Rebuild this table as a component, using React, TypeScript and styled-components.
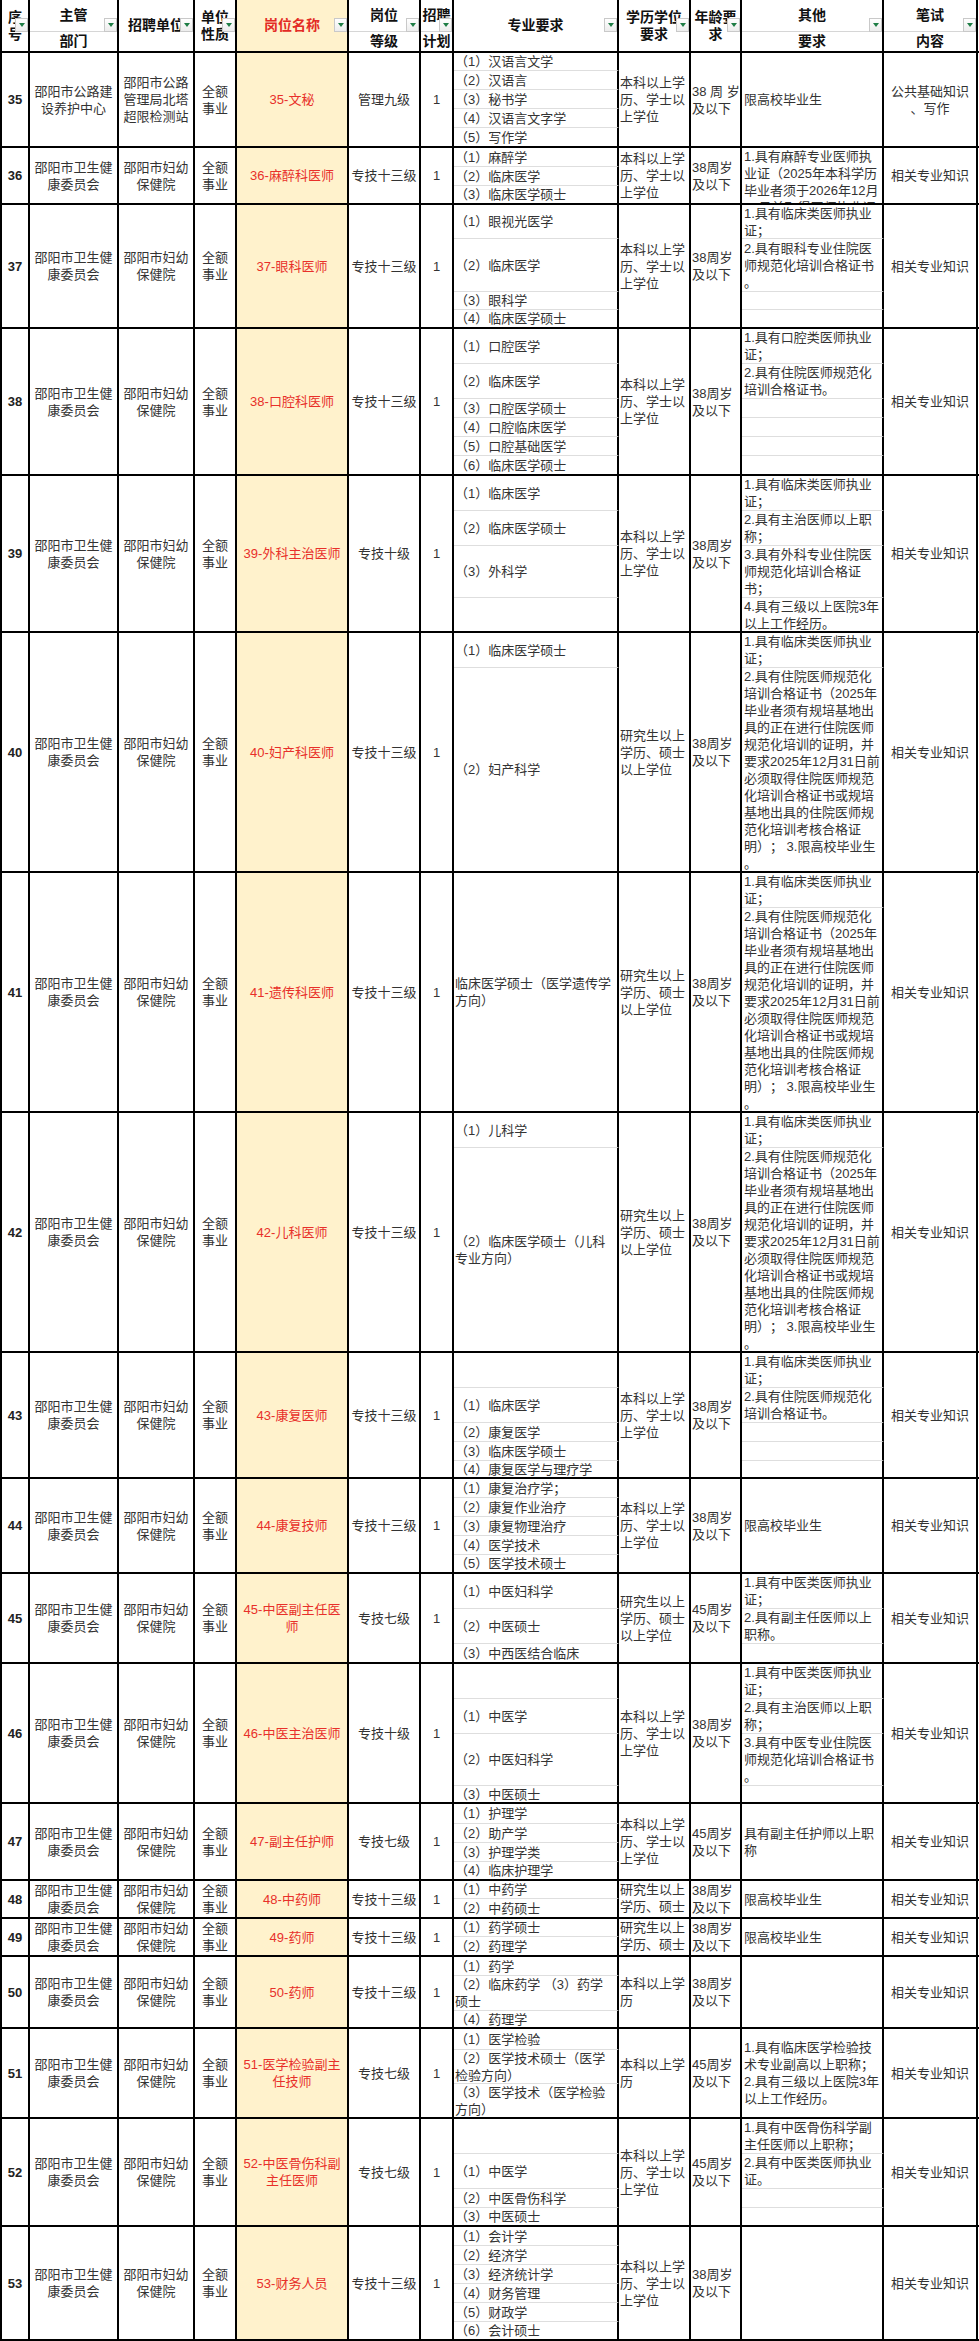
import React from 'react';
import styled, { createGlobalStyle, css } from 'styled-components';

const GlobalStyle = createGlobalStyle`
  html, body {
    margin: 0;
    padding: 0;
    background: #fff;
  }
  body {
    font-family: "Liberation Sans", "Noto Sans CJK SC", sans-serif;
    font-size: 13px;
    color: #333;
    text-spacing-trim: space-all;
  }
`;

// column widths include each cell's 2px right border
const COLS = '28px 89px 76px 42px 112px 72px 33px 165px 72px 51px 142px 94px';

const Sheet = styled.div`
  width: 978px;
  border-left: 2px solid #000;
  display: flex;
  flex-direction: column;
`;

const Row = styled.div<{ $h: number; $rows: string }>`
  display: grid;
  grid-template-columns: ${COLS};
  grid-template-rows: ${p => p.$rows};
  height: ${p => p.$h}px;
  box-sizing: border-box;
  border-bottom: 2px solid #000;
`;

const cellBase = css`
  box-sizing: border-box;
  border-right: 2px solid #000;
  overflow: hidden;
  min-height: 0;
  display: flex;
  flex-direction: column;
  justify-content: safe center;
  line-height: 17px;
  white-space: pre-line;
`;

// ---- header ----

const HeadCell = styled.div<{ $yellow?: boolean }>`
  ${cellBase};
  position: relative;
  grid-row: 1 / -1;
  justify-content: flex-start;
  background: ${p => (p.$yellow ? '#fff2cc' : '#fff')};
`;

const HeadText = styled.div<{ $red?: boolean }>`
  flex: 1;
  display: flex;
  align-items: center;
  justify-content: center;
  text-align: center;
  padding: 0 1px;
  font-weight: bold;
  font-size: 14px;
  line-height: 17px;
  color: ${p => (p.$red ? '#e32b25' : '#111')};
`;

const HeadTop = styled(HeadText)`
  flex: 0 0 32px;
  box-sizing: border-box;
  border-bottom: 1px solid #d6d6d6;
`;

const FilterBtn = styled.span`
  position: absolute;
  right: 0;
  top: 18px;
  width: 13px;
  height: 14px;
  box-sizing: border-box;
  border: 1px solid #c9c9c9;
  background: linear-gradient(#ffffff, #ededed);
  display: flex;
  align-items: center;
  justify-content: center;

  &::after {
    content: '';
    width: 0;
    height: 0;
    border-left: 3.5px solid transparent;
    border-right: 3.5px solid transparent;
    border-top: 4px solid #1e7d45;
  }
`;

// ---- body cells ----

const NoCell = styled.div`
  ${cellBase};
  grid-column: 1;
  grid-row: 1 / -1;
  align-items: center;
  font-weight: bold;
  color: #222;
`;

const CenterCell = styled.div<{ $col: number }>`
  ${cellBase};
  grid-column: ${p => p.$col};
  grid-row: 1 / -1;
  text-align: center;
  padding: 0 2px;
`;

const NameCell = styled.div`
  ${cellBase};
  grid-column: 5;
  grid-row: 1 / -1;
  text-align: center;
  padding: 0 4px;
  background: #fff2cc;
  color: #e8302a;
`;

const LeftCell = styled.div<{ $col: number }>`
  ${cellBase};
  grid-column: ${p => p.$col};
  grid-row: 1 / -1;
  padding: 0 0 0 1px;
`;

const ExamCell = styled.div`
  ${cellBase};
  grid-column: 12;
  grid-row: 1 / -1;
  text-align: center;
  padding: 0 4px;
  line-break: anywhere;
`;

const SubCell = styled.div<{ $col: number; $row: string; $last?: boolean; $other?: boolean }>`
  ${cellBase};
  grid-column: ${p => p.$col};
  grid-row: ${p => p.$row};
  border-bottom: ${p => (p.$last ? 'none' : '1px solid #dedede')};
  padding: ${p => (p.$other ? '0 0 0 2px' : '0 2px 0 1px')};
  ${p => p.$other && 'line-break: anywhere;'}
`;

// ---- data ----

type Job = {
  no: number;
  dept?: string;
  unit?: string;
  name: string;
  level?: string;
  edu?: string;
  age?: string;
  exam?: string;
  h: number;
  subs: number[];
  majors: (string | null)[] | string;
  other: (string | null)[] | string;
};

const BK = '本科以上学历、学士以上学位';
const YJ = '研究生以上学历、硕士以上学位';
const A45 = '45周岁及以下';
const LIMIT = '限高校毕业生';
const C1 = '1.具有临床类医师执业证；';
const RES2 = '2.具有住院医师规范化培训合格证书。';
const RES =
  '2.具有住院医师规范化培训合格证书（2025年毕业者须有规培基地出具的正在进行住院医师规范化培训的证明，并要求2025年12月31日前必须取得住院医师规范化培训合格证书或规培基地出具的住院医师规范化培训考核合格证\n明）； 3.限高校毕业生。';

const jobs: Job[] = [
  {
    no: 35,
    dept: '邵阳市公路建设养护中心',
    unit: '邵阳市公路管理局北塔超限检测站',
    name: '35-文秘',
    level: '管理九级',
    age: '38 周 岁及以下',
    exam: '公共基础知识、写作',
    h: 95,
    subs: [18, 19, 19, 19],
    majors: ['（1）汉语言文学', '（2）汉语言', '（3）秘书学', '（4）汉语言文字学', '（5）写作学'],
    other: LIMIT,
  },
  {
    no: 36,
    name: '36-麻醉科医师',
    h: 57,
    subs: [19, 19],
    majors: ['（1）麻醉学', '（2）临床医学', '（3）临床医学硕士'],
    other: '1.具有麻醉专业医师执业证（2025年本科学历毕业者须于2026年12月31日前取得医师执业证书）。',
  },
  {
    no: 37,
    name: '37-眼科医师',
    h: 124,
    subs: [34, 53, 18],
    majors: ['（1）眼视光医学', '（2）临床医学', '（3）眼科学', '（4）临床医学硕士'],
    other: [C1, '2.具有眼科专业住院医师规范化培训合格证书。', null, null],
  },
  {
    no: 38,
    name: '38-口腔科医师',
    h: 147,
    subs: [35, 35, 19, 19, 19],
    majors: ['（1）口腔医学', '（2）临床医学', '（3）口腔医学硕士', '（4）口腔临床医学', '（5）口腔基础医学', '（6）临床医学硕士'],
    other: ['1.具有口腔类医师执业证；', RES2, null, null, null, null],
  },
  {
    no: 39,
    name: '39-外科主治医师',
    level: '专技十级',
    h: 157,
    subs: [35, 35, 52],
    majors: ['（1）临床医学', '（2）临床医学硕士', '（3）外科学', null],
    other: [C1, '2.具有主治医师以上职称；', '3.具有外科专业住院医师规范化培训合格证\n书；', '4.具有三级以上医院3年以上工作经历。'],
  },
  {
    no: 40,
    name: '40-妇产科医师',
    edu: YJ,
    h: 240,
    subs: [35],
    majors: ['（1）临床医学硕士', '（2）妇产科学'],
    other: [C1, RES],
  },
  {
    no: 41,
    name: '41-遗传科医师',
    edu: YJ,
    h: 240,
    subs: [35],
    majors: '临床医学硕士（医学遗传学方向）',
    other: [C1, RES],
  },
  {
    no: 42,
    name: '42-儿科医师',
    edu: YJ,
    h: 240,
    subs: [35],
    majors: ['（1）儿科学', '（2）临床医学硕士（儿科专业方向）'],
    other: [C1, RES],
  },
  {
    no: 43,
    name: '43-康复医师',
    h: 126,
    subs: [35, 35, 19, 19],
    majors: [null, '（1）临床医学', '（2）康复医学', '（3）临床医学硕士', '（4）康复医学与理疗学'],
    other: [C1, RES2, null, null, null],
  },
  {
    no: 44,
    name: '44-康复技师',
    h: 95,
    subs: [19, 19, 19, 19],
    majors: ['（1）康复治疗学；', '（2）康复作业治疗', '（3）康复物理治疗', '（4）医学技术', '（5）医学技术硕士'],
    other: LIMIT,
  },
  {
    no: 45,
    name: '45-中医副主任医师',
    level: '专技七级',
    edu: YJ,
    age: A45,
    h: 90,
    subs: [35, 35],
    majors: ['（1）中医妇科学', '（2）中医硕士', '（3）中西医结合临床'],
    other: ['1.具有中医类医师执业证；', '2.具有副主任医师以上职称。', null],
  },
  {
    no: 46,
    name: '46-中医主治医师',
    level: '专技十级',
    h: 140,
    subs: [35, 35, 52],
    majors: [null, '（1）中医学', '（2）中医妇科学', '（3）中医硕士'],
    other: ['1.具有中医类医师执业证；', '2.具有主治医师以上职称；', '3.具有中医专业住院医师规范化培训合格证书。', null],
  },
  {
    no: 47,
    name: '47-副主任护师',
    level: '专技七级',
    age: A45,
    h: 77,
    subs: [20, 19, 19],
    majors: ['（1）护理学', '（2）助产学', '（3）护理学类', '（4）临床护理学'],
    other: '具有副主任护师以上职称',
  },
  {
    no: 48,
    name: '48-中药师',
    edu: YJ,
    h: 38,
    subs: [18],
    majors: ['（1）中药学', '（2）中药硕士'],
    other: LIMIT,
  },
  {
    no: 49,
    name: '49-药师',
    edu: YJ,
    h: 38,
    subs: [18],
    majors: ['（1）药学硕士', '（2）药理学'],
    other: LIMIT,
  },
  {
    no: 50,
    name: '50-药师',
    edu: '本科以上学历',
    h: 72,
    subs: [19, 35],
    majors: ['（1）药学', '（2）临床药学 （3）药学\n硕士', '（4）药理学'],
    other: '',
  },
  {
    no: 51,
    name: '51-医学检验副主任技师',
    level: '专技七级',
    edu: '本科以上学历',
    age: A45,
    h: 90,
    subs: [21, 34],
    majors: ['（1）医学检验', '（2）医学技术硕士（医学检验方向）', '（3）医学技术（医学检验方向）'],
    other: '1.具有临床医学检验技术专业副高以上职称；\n2.具有三级以上医院3年以上工作经历。',
  },
  {
    no: 52,
    name: '52-中医骨伤科副主任医师',
    level: '专技七级',
    age: A45,
    h: 108,
    subs: [35, 35, 19],
    majors: [null, '（1）中医学', '（2）中医骨伤科学', '（3）中医硕士'],
    other: ['1.具有中医骨伤科学副主任医师以上职称；', '2.具有中医类医师执业证。', null, null],
  },
  {
    no: 53,
    name: '53-财务人员',
    h: 114,
    subs: [19, 19, 19, 19, 19],
    majors: ['（1）会计学', '（2）经济学', '（3）经济统计学', '（4）财务管理', '（5）财政学', '（6）会计硕士'],
    other: '',
  },
];

function SubColumn({ col, items, other }: { col: number; items: (string | null)[] | string; other?: boolean }) {
  if (typeof items === 'string') {
    return (
      <SubCell $col={col} $row="1 / -1" $last $other={other}>
        {items}
      </SubCell>
    );
  }
  return (
    <>
      {items.map((t, i) => (
        <SubCell key={i} $col={col} $row={`${i + 1}`} $last={i === items.length - 1} $other={other}>
          {t}
        </SubCell>
      ))}
    </>
  );
}

function JobRow({ job }: { job: Job }) {
  const rows = job.subs.map(s => `${s}px`).join(' ') + ' minmax(0, 1fr)';
  return (
    <Row $h={job.h} $rows={rows}>
      <NoCell>{job.no}</NoCell>
      <CenterCell $col={2}>{job.dept ?? '邵阳市卫生健康委员会'}</CenterCell>
      <CenterCell $col={3}>{job.unit ?? '邵阳市妇幼保健院'}</CenterCell>
      <CenterCell $col={4}>全额事业</CenterCell>
      <NameCell>{job.name}</NameCell>
      <CenterCell $col={6}>{job.level ?? '专技十三级'}</CenterCell>
      <CenterCell $col={7}>1</CenterCell>
      <SubColumn col={8} items={job.majors} />
      <LeftCell $col={9}>{job.edu ?? BK}</LeftCell>
      <LeftCell $col={10}>{job.age ?? '38周岁及以下'}</LeftCell>
      <SubColumn col={11} items={job.other} other />
      <ExamCell>{job.exam ?? '相关专业知识'}</ExamCell>
    </Row>
  );
}

type Head = { top: string; bottom?: string; red?: boolean; yellow?: boolean };

const heads: Head[] = [
  { top: '序号' },
  { top: '主管', bottom: '部门' },
  { top: '招聘单位' },
  { top: '单位性质' },
  { top: '岗位名称', red: true, yellow: true },
  { top: '岗位', bottom: '等级' },
  { top: '招聘', bottom: '计划' },
  { top: '专业要求' },
  { top: '学历学位要求' },
  { top: '年龄要求' },
  { top: '其他', bottom: '要求' },
  { top: '笔试', bottom: '内容' },
];

function HeaderRow() {
  return (
    <Row $h={53} $rows="minmax(0, 1fr)">
      {heads.map(h => (
        <HeadCell key={h.top} $yellow={h.yellow}>
          {h.bottom ? (
            <>
              <HeadTop>{h.top}</HeadTop>
              <HeadText>{h.bottom}</HeadText>
            </>
          ) : (
            <HeadText $red={h.red}>{h.top}</HeadText>
          )}
          <FilterBtn />
        </HeadCell>
      ))}
    </Row>
  );
}

export default function App() {
  return (
    <>
      <GlobalStyle />
      <Sheet>
        <HeaderRow />
        {jobs.map(j => (
          <JobRow key={j.no} job={j} />
        ))}
      </Sheet>
    </>
  );
}
